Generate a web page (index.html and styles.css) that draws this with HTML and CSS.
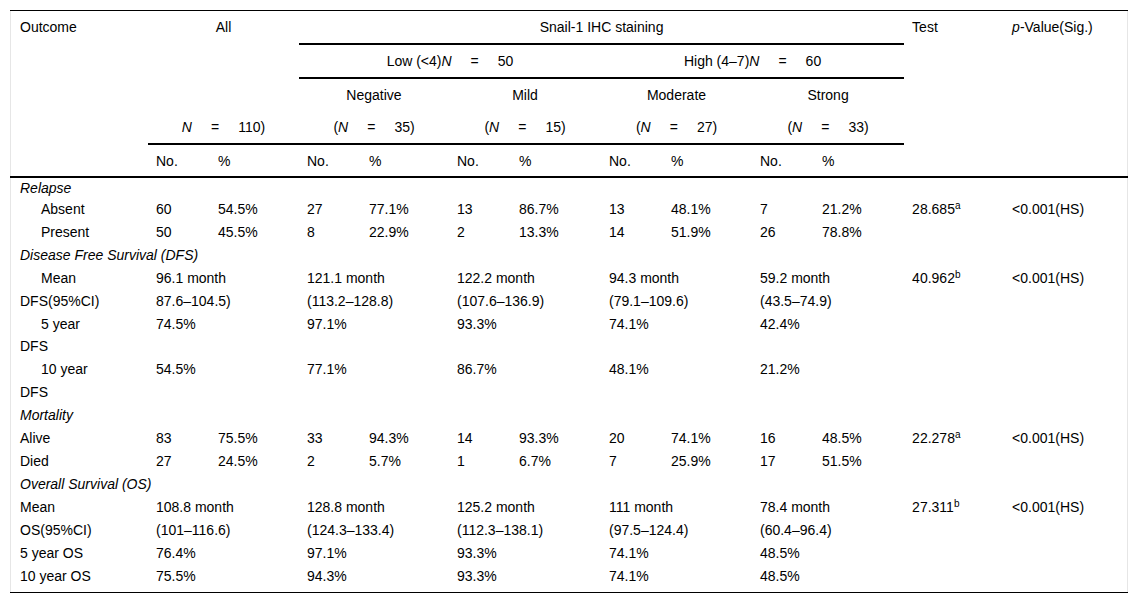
FILE: index.html
```html
<!DOCTYPE html>
<html>
<head>
<meta charset="utf-8">
<link rel="stylesheet" href="styles.css">
</head>
<body>
<div class="wrap">
<table class="tbl">
<colgroup>
<col class="w-lab"><col class="w-no"><col class="w-pc"><col class="w-no"><col class="w-pc2"><col class="w-no"><col class="w-pc3"><col class="w-no"><col class="w-pc"><col class="w-no"><col class="w-pc3"><col class="w-test"><col class="w-p">
</colgroup>
<thead>
<tr class="h1">
<th class="l">Outcome</th>
<th colspan="2" class="c">All</th>
<th colspan="8" class="c bb">Snail-1 IHC staining</th>
<th class="l">Test</th>
<th class="l"><i>p</i>-Value(Sig.)</th>
</tr>
<tr class="h">
<th></th>
<th colspan="2"></th>
<th colspan="4" class="c bb">Low (&lt;4)<i>N</i><span class="eq">=</span>50</th>
<th colspan="4" class="c bb">High (4–7)<i>N</i><span class="eq">=</span>60</th>
<th></th><th></th>
</tr>
<tr class="h">
<th></th>
<th colspan="2"></th>
<th colspan="2" class="c">Negative</th>
<th colspan="2" class="c">Mild</th>
<th colspan="2" class="c">Moderate</th>
<th colspan="2" class="c">Strong</th>
<th></th><th></th>
</tr>
<tr class="h">
<th></th>
<th colspan="2" class="c bb"><i>N</i><span class="eq">=</span>110)</th>
<th colspan="2" class="c bb">(<i>N</i><span class="eq">=</span>35)</th>
<th colspan="2" class="c bb">(<i>N</i><span class="eq">=</span>15)</th>
<th colspan="2" class="c bb">(<i>N</i><span class="eq">=</span>27)</th>
<th colspan="2" class="c bb">(<i>N</i><span class="eq">=</span>33)</th>
<th></th><th></th>
</tr>
<tr class="h last">
<th></th>
<th class="l">No.</th><th class="l">%</th>
<th class="l">No.</th><th class="l">%</th>
<th class="l">No.</th><th class="l">%</th>
<th class="l">No.</th><th class="l">%</th>
<th class="l">No.</th><th class="l">%</th>
<th></th><th></th>
</tr>
</thead>
<tbody>
<tr class="first"><td colspan="13" class="sec">Relapse</td></tr>
<tr><td class="lab ind">Absent</td><td>60</td><td>54.5%</td><td>27</td><td>77.1%</td><td>13</td><td>86.7%</td><td>13</td><td>48.1%</td><td>7</td><td>21.2%</td><td>28.685<sup>a</sup></td><td>&lt;0.001(HS)</td></tr>
<tr><td class="lab ind">Present</td><td>50</td><td>45.5%</td><td>8</td><td>22.9%</td><td>2</td><td>13.3%</td><td>14</td><td>51.9%</td><td>26</td><td>78.8%</td><td></td><td></td></tr>
<tr><td colspan="13" class="sec">Disease Free Survival (DFS)</td></tr>
<tr><td class="lab ind">Mean DFS(95%CI)</td><td colspan="2">96.1 month <span class="nw">87.6–104.5)</span></td><td colspan="2">121.1 month <span class="nw">(113.2–128.8)</span></td><td colspan="2">122.2 month <span class="nw">(107.6–136.9)</span></td><td colspan="2">94.3 month <span class="nw">(79.1–109.6)</span></td><td colspan="2">59.2 month <span class="nw">(43.5–74.9)</span></td><td>40.962<sup>b</sup></td><td>&lt;0.001(HS)</td></tr>
<tr><td class="lab ind">5 year DFS</td><td colspan="2">74.5%</td><td colspan="2">97.1%</td><td colspan="2">93.3%</td><td colspan="2">74.1%</td><td colspan="2">42.4%</td><td></td><td></td></tr>
<tr><td class="lab ind">10 year DFS</td><td colspan="2">54.5%</td><td colspan="2">77.1%</td><td colspan="2">86.7%</td><td colspan="2">48.1%</td><td colspan="2">21.2%</td><td></td><td></td></tr>
<tr><td colspan="13" class="sec">Mortality</td></tr>
<tr><td class="lab">Alive</td><td>83</td><td>75.5%</td><td>33</td><td>94.3%</td><td>14</td><td>93.3%</td><td>20</td><td>74.1%</td><td>16</td><td>48.5%</td><td>22.278<sup>a</sup></td><td>&lt;0.001(HS)</td></tr>
<tr><td class="lab">Died</td><td>27</td><td>24.5%</td><td>2</td><td>5.7%</td><td>1</td><td>6.7%</td><td>7</td><td>25.9%</td><td>17</td><td>51.5%</td><td></td><td></td></tr>
<tr><td colspan="13" class="sec">Overall Survival (OS)</td></tr>
<tr><td class="lab">Mean OS(95%CI)</td><td colspan="2">108.8 month <span class="nw">(101–116.6)</span></td><td colspan="2">128.8 month <span class="nw">(124.3–133.4)</span></td><td colspan="2">125.2 month <span class="nw">(112.3–138.1)</span></td><td colspan="2">111 month <span class="nw">(97.5–124.4)</span></td><td colspan="2">78.4 month <span class="nw">(60.4–96.4)</span></td><td>27.311<sup>b</sup></td><td>&lt;0.001(HS)</td></tr>
<tr><td class="lab">5 year OS</td><td colspan="2">76.4%</td><td colspan="2">97.1%</td><td colspan="2">93.3%</td><td colspan="2">74.1%</td><td colspan="2">48.5%</td><td></td><td></td></tr>
<tr class="end"><td class="lab">10 year OS</td><td colspan="2">75.5%</td><td colspan="2">94.3%</td><td colspan="2">93.3%</td><td colspan="2">74.1%</td><td colspan="2">48.5%</td><td></td><td></td></tr>
</tbody>
</table>
</div>
</body>
</html>
```
FILE: styles.css
```css
html, body {
  margin: 0;
  padding: 0;
  background: #fff;
}
body {
  font-family: "Liberation Sans", Arial, sans-serif;
  font-size: 14px;
  color: #000;
}
.wrap {
  margin: 10px 10px 0 10px;
  border-left: 1px solid #e6e6e6;
  border-right: 1px solid #e6e6e6;
  width: 1118px;
  box-sizing: border-box;
}
.tbl {
  width: 1118px;
  margin-left: -1px;
  border-collapse: collapse;
  table-layout: fixed;
  border-top: 1px solid #000;
  border-bottom: 1px solid #000;
}
.w-lab { width: 138px; }
.w-no { width: 62px; }
.w-pc { width: 89px; }
.w-pc2 { width: 88px; }
.w-pc3 { width: 90px; }
.w-test { width: 100px; }
.w-p { width: 124px; }
th {
  font-weight: normal;
  padding: 5px 8px 5px 8px;
  line-height: 22px;
  vertical-align: top;
}
th.l { text-align: left; }
th.c { text-align: center; }
th.bb { border-bottom: 2px solid #000; }
tr.h1 th:first-child { padding-left: 10px; }
tr.last th {
  border-bottom: 2px solid #000;
  padding-bottom: 4px;
}
td {
  padding: 0 8px;
  line-height: 22.9px;
  vertical-align: top;
  text-align: left;
}
td.lab {
  padding-left: 10px;
  padding-right: 40px;
}
td.ind { text-indent: 21px; }
td.sec {
  font-style: italic;
  padding-left: 10px;
}
tr.first td { padding-top: 0; line-height: 20px; }
tr.end td { padding-bottom: 5px; }
.nw { white-space: nowrap; }
.eq {
  display: inline-block;
  margin: 0 19px;
}
sup {
  font-size: 10px;
  line-height: 0;
  vertical-align: 5px;
}
```
